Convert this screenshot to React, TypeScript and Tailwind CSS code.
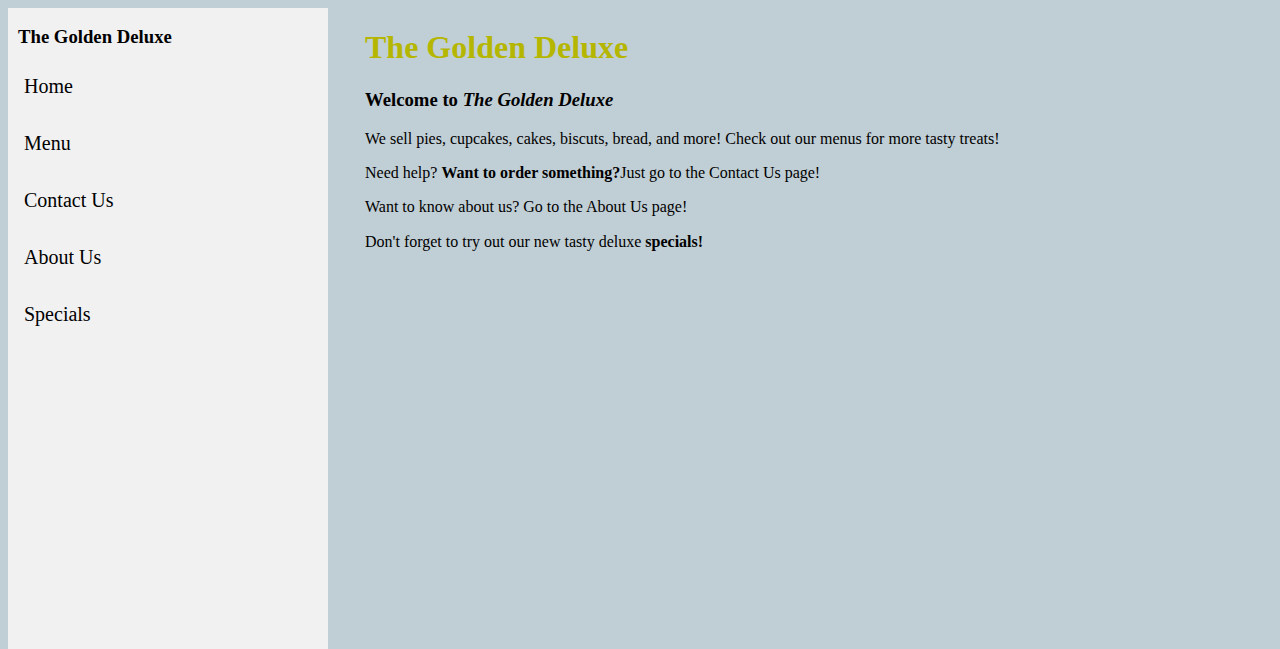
import React from "react";

export default function App() {
  const nav = ["Home", "Menu", "Contact Us", "About Us", "Specials"];
  return (
    <div
      className="flex h-screen overflow-hidden bg-[#c0ced5] pl-2 pt-2 text-black"
      style={{ fontFamily: '"Liberation Serif", "Times New Roman", serif' }}
    >
      <aside className="w-[320px] shrink-0 bg-[#f1f1f1]">
        <h3 className="mt-[18px] pl-[10px] text-[18.72px] font-bold leading-[21.5px]">
          The Golden Deluxe
        </h3>
        <ul className="mt-[10px]">
          {nav.map((n) => (
            <li key={n} className="pl-[16px] py-[17px] text-[20px] leading-[23px]">
              {n}
            </li>
          ))}
        </ul>
      </aside>
      <main className="ml-[37px] pt-[21px]">
        <h1 className="text-[32px] font-bold leading-[37px] text-[#b5b600]">
          The Golden Deluxe
        </h1>
        <h3 className="mt-[23px] text-[18.72px] font-bold leading-[21.5px]">
          Welcome to <i>The Golden Deluxe</i>
        </h3>
        <p className="mt-[19px] text-[16px] leading-[18.4px]">
          We sell pies, cupcakes, cakes, biscuts, bread, and more! Check out our menus for more tasty treats!
        </p>
        <p className="mt-[16px] text-[16px] leading-[18.4px]">
          Need help? <b>Want to order something?</b>Just go to the Contact Us page!
        </p>
        <p className="mt-[16px] text-[16px] leading-[18.4px]">
          Want to know about us? Go to the About Us page!
        </p>
        <p className="mt-[16px] text-[16px] leading-[18.4px]">
          Don't forget to try out our new tasty deluxe <b>specials!</b>
        </p>
      </main>
    </div>
  );
}
